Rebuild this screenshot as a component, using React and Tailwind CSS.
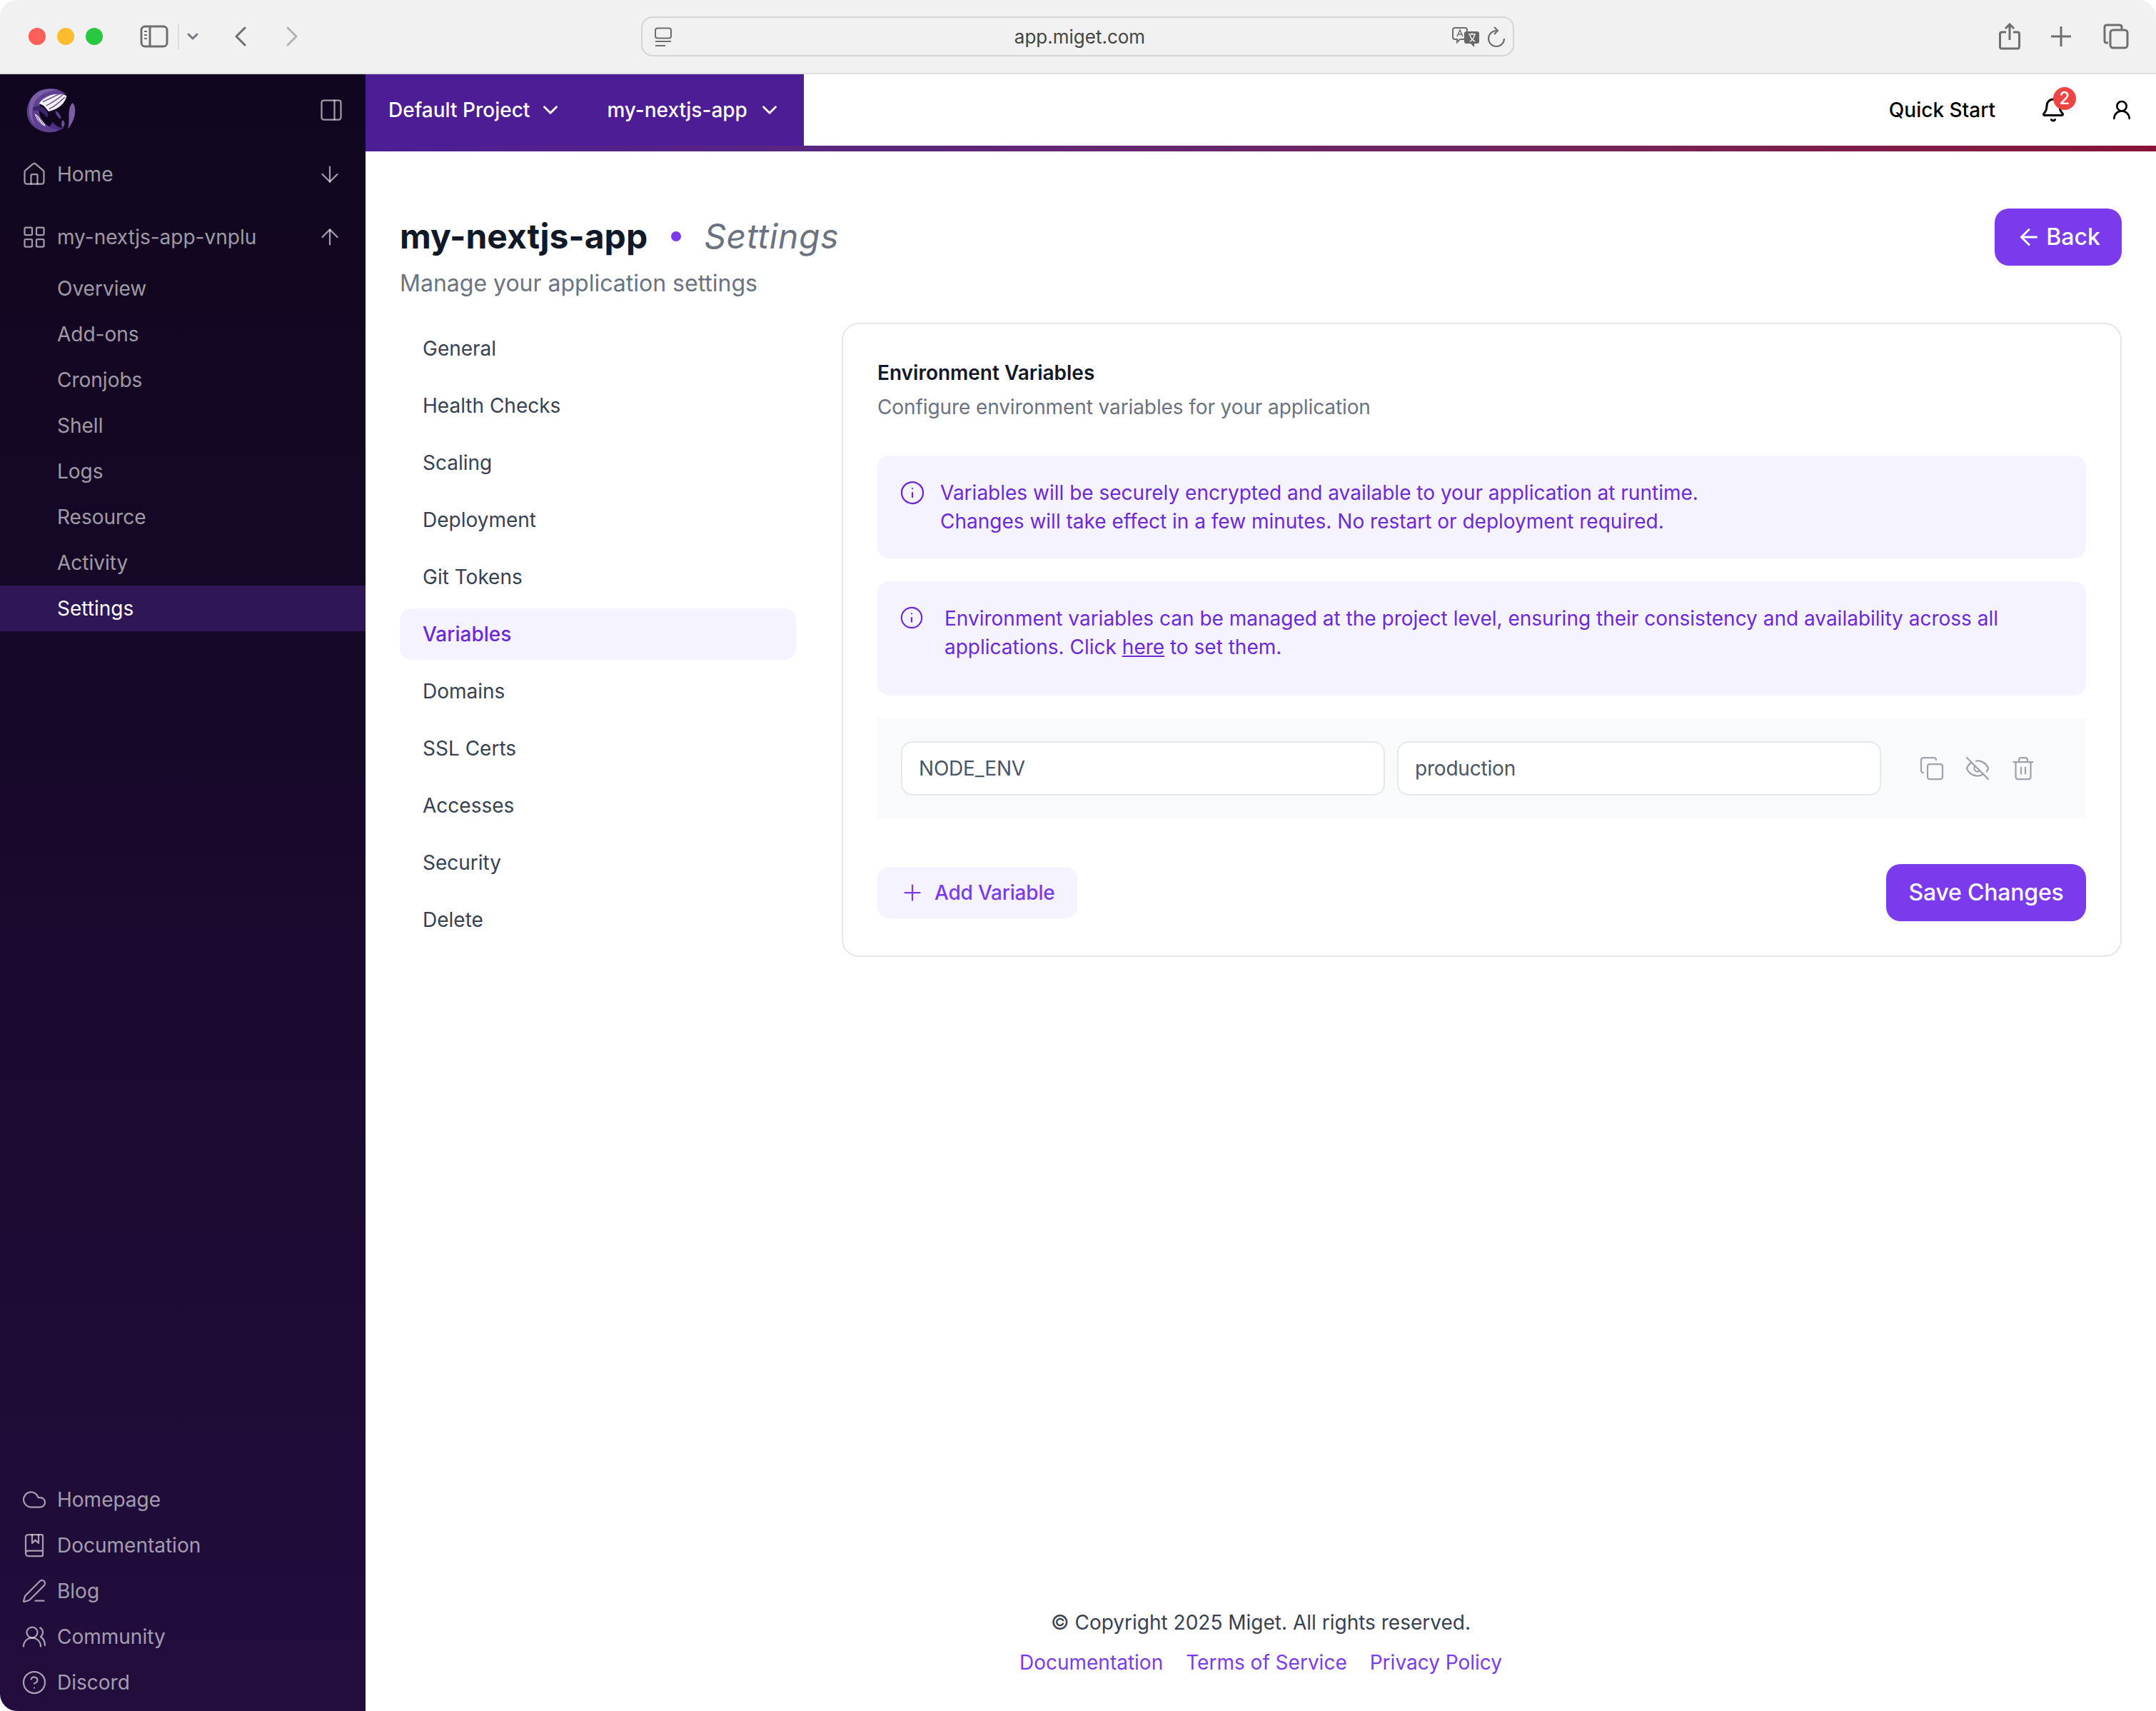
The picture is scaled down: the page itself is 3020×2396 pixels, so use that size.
import React from "react";
import {
  House, LayoutGrid, PanelRight, ArrowDown, ArrowUp, Cloud, BookMarked, PenLine, UsersRound,
  CircleHelp, ChevronDown, Bell, UserRound, ArrowLeft, Info, Copy, EyeOff, Trash2, Plus,
} from "lucide-react";

const subItems = ["Overview", "Add-ons", "Cronjobs", "Shell", "Logs", "Resource", "Activity"];
const navItems = ["General", "Health Checks", "Scaling", "Deployment", "Git Tokens", "Variables", "Domains", "SSL Certs", "Accesses", "Security", "Delete"];
const footerNav = [
  ["Homepage", Cloud],
  ["Documentation", BookMarked],
  ["Blog", PenLine],
  ["Community", UsersRound],
  ["Discord", CircleHelp],
];

function Logo() {
  return (
    <svg width="100" height="84" viewBox="0 0 300 252" aria-label="Miget logo">
      <path d="M205 60C170 28 100 25 65 68C28 115 34 178 85 206C125 228 172 222 196 198C170 205 135 205 112 178C90 150 85 120 100 95C130 75 175 62 205 60Z" fill="#5f3f92" />
      <path d="M62 75C85 40 135 32 175 42C130 45 90 60 70 100C60 130 60 165 78 192C48 165 42 115 62 75Z" fill="#7a5fa6" />
      <path d="M92 98C120 62 170 50 208 66C203 98 172 125 132 132L112 108Z" fill="#f4f1f8" />
      <path d="M108 92C130 82 150 72 178 58M122 108C145 96 168 82 192 62M134 122C155 112 178 95 200 72" stroke="#5f3f92" strokeWidth="4" fill="none" />
      <path d="M66 118C80 100 108 110 122 128C132 142 132 152 124 158C108 135 88 122 70 132Z" fill="#3f2470" />
      <path d="M74 142C88 150 108 170 120 194C100 190 82 170 74 142Z" fill="#efeaf5" />
      <path d="M82 152L100 184M90 150L110 186" stroke="#5f3f92" strokeWidth="3" fill="none" />
      <path d="M232 97C252 108 248 170 212 206C226 170 206 126 232 97Z" fill="#7b5da8" />
      <path d="M160 128C175 135 185 150 184 165C172 158 162 145 160 128Z" fill="#5f3f92" />
      <path d="M150 176C158 190 172 196 195 204C170 214 145 205 135 196C140 190 145 183 150 176Z" fill="#4d2f80" />
      <path d="M192 168C202 178 202 190 192 200C184 192 184 178 192 168Z" fill="#6d4f9c" />
    </svg>
  );
}

function BrowserBar() {
  const stroke = "#6e6e6e";
  return (
    <div className="flex h-[104px] shrink-0 items-center border-b-2 border-[#dedede] bg-[#f1f1f1] pl-[40px]">
      <div className="flex gap-[16px]">
        <span className="h-[24px] w-[24px] rounded-full bg-[#ff5f57]" />
        <span className="h-[24px] w-[24px] rounded-full bg-[#febc2e]" />
        <span className="h-[24px] w-[24px] rounded-full bg-[#28c840]" />
      </div>
      <svg className="ml-[52px]" width="40" height="32" viewBox="0 0 40 32" fill="none">
        <rect x="2" y="2" width="36" height="28" rx="5" stroke={stroke} strokeWidth="3" />
        <path d="M14 2V30" stroke={stroke} strokeWidth="3" />
        <path d="M6 9H10M6 14H10M6 19H10" stroke={stroke} strokeWidth="2" />
      </svg>
      <span className="ml-[13px] h-[36px] w-[2px] bg-[#dcdcdc]" />
      <svg className="ml-[11px]" width="16" height="12" viewBox="0 0 16 12" fill="none">
        <path d="M2 3L8 9L14 3" stroke="#77777f" strokeWidth="3" strokeLinecap="round" strokeLinejoin="round" />
      </svg>
      <svg className="ml-[49px]" width="20" height="30" viewBox="0 0 20 30" fill="none">
        <path d="M16 3L4 15L16 27" stroke={stroke} strokeWidth="3" strokeLinecap="round" strokeLinejoin="round" />
      </svg>
      <svg className="ml-[52px]" width="20" height="30" viewBox="0 0 20 30" fill="none">
        <path d="M4 3L16 15L4 27" stroke="#b3b3b3" strokeWidth="3" strokeLinecap="round" strokeLinejoin="round" />
      </svg>
      <div className="relative ml-[479px] flex h-[56px] w-[1223px] items-center justify-center rounded-[16px] border-2 border-[#d4d4d4] bg-[#f1f1f1]">
        <svg className="absolute left-[16px] top-[13px]" width="26" height="28" viewBox="0 0 26 28" fill="none">
          <rect x="2" y="1.5" width="22" height="14" rx="3" stroke={stroke} strokeWidth="2" />
          <path d="M2 20H24M2 26H16" stroke={stroke} strokeWidth="2" />
        </svg>
        <span className="ml-[6px] mt-[2px] text-[26px] leading-[32px] text-[#444444]">app.miget.com</span>
        <svg className="absolute left-[1134px] top-[12px]" width="40" height="30" viewBox="0 0 40 30" fill="none">
          <path d="M4 2H18C20 2 21 3 21 5V15C21 17 20 18 18 18H11L7 22V18H4C2 18 1 17 1 15V5C1 3 2 2 4 2Z" stroke={stroke} strokeWidth="2" />
          <path d="M7 14L11 5L15 14M8.5 11H13.5" stroke={stroke} strokeWidth="1.5" />
          <rect x="17" y="7" width="21" height="17" rx="3" fill="#666666" />
          <path d="M26 24L31 29V24Z" fill="#666666" />
          <path d="M23 11H33M28 9V11M25 21C29 19 31 15 31.5 11M25 12C26 16 28 19 32 21" stroke="#f1f1f1" strokeWidth="1.5" />
        </svg>
        <svg className="absolute left-[1184px] top-[12px]" width="26" height="30" viewBox="0 0 26 30" fill="none">
          <path d="M12 6A11 11 0 1 0 23 17" stroke={stroke} strokeWidth="2.2" />
          <path d="M9 1L14 6L9 11" stroke={stroke} strokeWidth="2.2" />
        </svg>
      </div>
      <svg className="ml-[679px]" width="30" height="38" viewBox="0 0 30 38" fill="none">
        <path d="M10 13H4C2.5 13 1.5 14 1.5 15.5V33.5C1.5 35 2.5 36 4 36H26C27.5 36 28.5 35 28.5 33.5V15.5C28.5 14 27.5 13 26 13H20" stroke={stroke} strokeWidth="3" />
        <path d="M15 24V2M9 8L15 2L21 8" stroke={stroke} strokeWidth="3" />
      </svg>
      <svg className="ml-[43px]" width="28" height="28" viewBox="0 0 28 28" fill="none">
        <path d="M14 1V27M1 14H27" stroke={stroke} strokeWidth="3" strokeLinecap="round" />
      </svg>
      <svg className="ml-[45px]" width="36" height="36" viewBox="0 0 36 36" fill="none">
        <path d="M7 27H5C3 27 2 26 2 24V5C2 3 3 2 5 2H23C25 2 26 3 26 5V9" stroke={stroke} strokeWidth="3" />
        <rect x="10" y="9" width="24" height="25" rx="4" stroke={stroke} strokeWidth="3" />
      </svg>
    </div>
  );
}

function Sidebar() {
  return (
    <aside className="flex w-[512px] shrink-0 flex-col bg-gradient-to-b from-[#10061e] to-[#220d3d] text-[28px] leading-[40px] text-white/60">
      <div className="flex h-[100px] items-center justify-between pl-[24px] pr-[30px]">
        <Logo />
        <PanelRight size={36} strokeWidth={1.5} />
      </div>
      <div className="mt-[8px] flex h-[64px] items-center justify-between pl-[30px] pr-[32px]">
        <span className="flex items-center gap-[14px]"><House size={36} strokeWidth={1.5} />Home</span>
        <ArrowDown size={36} strokeWidth={1.5} />
      </div>
      <div className="mt-[24px] flex h-[64px] items-center justify-between pl-[30px] pr-[32px]">
        <span className="flex items-center gap-[14px]"><LayoutGrid size={36} strokeWidth={1.5} />my-nextjs-app-vnplu</span>
        <ArrowUp size={36} strokeWidth={1.5} />
      </div>
      <div className="mt-[8px] flex flex-col">
        {subItems.map((s) => (
          <div key={s} className="flex h-[64px] items-center pl-[80px]">{s}</div>
        ))}
        <div className="flex h-[64px] items-center bg-[#2f1657] pl-[80px] text-white">Settings</div>
      </div>
      <div className="mt-auto flex flex-col pb-[8px]">
        {footerNav.map(([label, Icon]) => (
          <div key={label} className="flex h-[64px] items-center gap-[14px] pl-[30px]">
            <Icon size={36} strokeWidth={1.5} />
            {label}
          </div>
        ))}
      </div>
    </aside>
  );
}

function TopHeader() {
  return (
    <header className="shrink-0">
      <div className="flex h-[100px] items-center bg-white">
        <div className="flex h-full w-[614px] items-center bg-[#4c1d95] pl-[32px] text-[28px] font-medium leading-[40px] text-white">
          <span>Default Project</span>
          <ChevronDown className="ml-[12px]" size={34} strokeWidth={2} />
          <span className="ml-[62px]">my-nextjs-app</span>
          <ChevronDown className="ml-[14px]" size={34} strokeWidth={2} />
        </div>
        <span className="ml-auto text-[28px] font-medium leading-[40px] text-black">Quick Start</span>
        <div className="relative ml-[63px] flex">
          <Bell size={36} strokeWidth={2} className="text-black" />
          <span className="absolute left-[18px] top-[-14px] flex h-[32px] w-[32px] items-center justify-center rounded-full bg-[#ef4444] text-[24px] font-medium leading-none text-white">2</span>
        </div>
        <UserRound className="ml-[62px] mr-[32px] text-black" size={32} strokeWidth={2} />
      </div>
      <div className="h-[8px] bg-gradient-to-r from-[#4c1d95] to-[#881337]" />
    </header>
  );
}

function Alert({ children, gap, pb, iconSize }) {
  return (
    <div className={`flex rounded-[16px] bg-[#f5f3ff] pl-[31px] pr-[32px] pt-[32px] text-[28px] leading-[40px] text-[#6d28d9] ${gap} ${pb}`}>
      <Info size={iconSize} strokeWidth={1.5} className="mt-[2px] shrink-0" />
      <div>{children}</div>
    </div>
  );
}

function Content() {
  return (
    <main className="flex min-w-0 flex-1 flex-col bg-white">
      <TopHeader />
      <div className="flex flex-1 flex-col px-[48px] pt-[80px]">
        <div className="flex justify-between">
          <div className="pt-[7px]">
            <h1 className="flex items-center text-[48px] leading-[64px]">
              <span className="font-bold text-[#111827]">my-nextjs-app</span>
              <span className="ml-[33px] mr-[32px] h-[14px] w-[14px] rounded-full bg-[#7c3aed]" />
              <span className="italic tracking-[0.7px] text-[#6b7280]">Settings</span>
            </h1>
            <p className="mt-[10px] text-[32px] leading-[48px] text-[#6b7280]">Manage your application settings</p>
          </div>
          <button className="flex h-[80px] w-[178px] items-center justify-center gap-[6px] rounded-[20px] bg-[#7c3aed] text-[32px] font-medium text-white">
            <ArrowLeft size={36} strokeWidth={2} />
            Back
          </button>
        </div>
        <div className="mt-[31px] flex gap-[64px]">
          <nav className="flex w-[555px] shrink-0 flex-col gap-[8px]">
            {navItems.map((n) => (
              <div
                key={n}
                className={n === "Variables"
                  ? "flex h-[72px] items-center rounded-[16px] bg-[#f5f3ff] pl-[32px] text-[28px] font-medium text-[#6d28d9]"
                  : "flex h-[72px] items-center pl-[32px] text-[28px] text-[#374151]"}
              >
                {n}
              </div>
            ))}
          </nav>
          <section className="flex-1 rounded-[24px] border-2 border-[#e5e7eb] p-[48px]">
            <h2 className="text-[28px] font-semibold leading-[40px] text-[#111827]">Environment Variables</h2>
            <p className="mt-[8px] text-[28px] leading-[40px] tracking-[-0.1px] text-[#6b7280]">Configure environment variables for your application</p>
            <div className="mt-[48px] flex flex-col gap-[32px]">
              <Alert gap="gap-[21px]" pb="pb-[32px]" iconSize={36}>
                Variables will be securely encrypted and available to your application at runtime.<br />
                Changes will take effect in a few minutes. No restart or deployment required.
              </Alert>
              <Alert gap="gap-[29px]" pb="pb-[48px]" iconSize={34}>
                Environment variables can be managed at the project level, ensuring their consistency and availability across all<br />
                applications. Click <a className="underline">here</a> to set them.
              </Alert>
              <div className="flex items-center bg-[#f9fafb] py-[32px] pl-[33px]">
                <div className="flex h-[76px] w-[678px] items-center rounded-[16px] border-2 border-[#e5e7eb] bg-white pl-[23px] text-[28px] tracking-[-0.2px] text-[#4b5563]">NODE_ENV</div>
                <div className="ml-[17px] flex h-[76px] w-[678px] items-center rounded-[16px] border-2 border-[#e5e7eb] bg-white pl-[23px] text-[28px] tracking-[-0.2px] text-[#4b5563]">production</div>
                <div className="ml-[39px] flex text-[#9ca3af]">
                  <span className="flex w-[64px] justify-center"><Copy size={36} strokeWidth={1.5} /></span>
                  <span className="flex w-[64px] justify-center"><EyeOff size={36} strokeWidth={1.5} /></span>
                  <span className="flex w-[64px] justify-center"><Trash2 size={36} strokeWidth={1.5} /></span>
                </div>
              </div>
            </div>
            <div className="mt-[64px] flex items-center justify-between">
              <button className="flex h-[72px] w-[280px] items-center gap-[13px] rounded-[16px] bg-[#f5f3ff] pl-[31px] text-[28px] font-medium tracking-[-0.2px] text-[#7c3aed]">
                <Plus size={36} strokeWidth={1.5} />
                Add Variable
              </button>
              <button className="flex h-[80px] w-[280px] items-center justify-center rounded-[20px] bg-[#7c3aed] text-[32px] font-medium tracking-[-0.2px] text-white">Save Changes</button>
            </div>
          </section>
        </div>
        <footer className="mt-auto flex flex-col items-center gap-[16px] pb-[48px] text-[28px] leading-[40px]">
          <p className="text-[#374151]">© Copyright 2025 Miget. All rights reserved.</p>
          <div className="flex gap-[32px] text-[#7c3aed]">
            <a>Documentation</a>
            <a>Terms of Service</a>
            <a>Privacy Policy</a>
          </div>
        </footer>
      </div>
    </main>
  );
}

export default function App() {
  return (
    <div className="flex h-[2396px] w-[3020px] flex-col overflow-hidden rounded-[24px] bg-white [font-family:Inter,'Liberation_Sans',sans-serif]">
      <BrowserBar />
      <div className="flex min-h-0 flex-1">
        <Sidebar />
        <Content />
      </div>
    </div>
  );
}
